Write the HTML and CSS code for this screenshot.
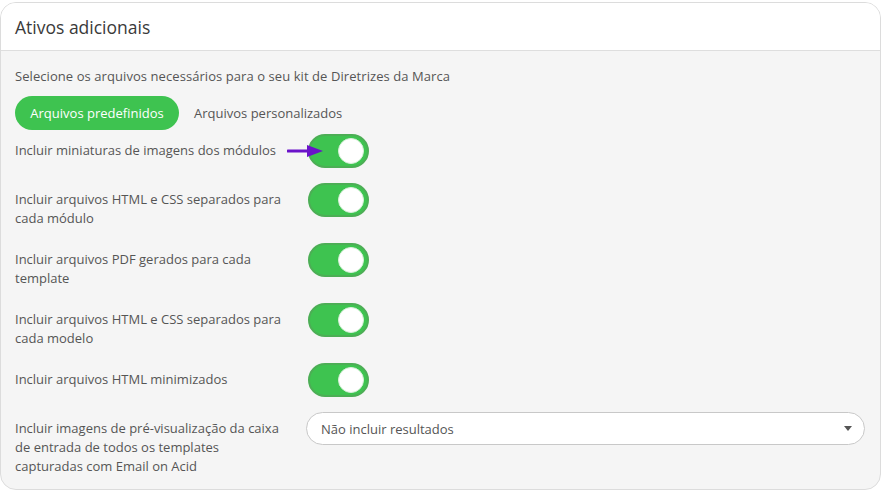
FILE: index.html
```html
<!DOCTYPE html>
<html lang="pt">
<head>
<meta charset="utf-8">
<link rel="stylesheet" href="styles.css">
</head>
<body>
<div class="card">
  <div class="card-header">Ativos adicionais</div>
  <div class="card-body">
    <p class="intro">Selecione os arquivos necessários para o seu kit de Diretrizes da Marca</p>
    <div class="tabs">
      <span class="tab active">Arquivos predefinidos</span>
      <span class="tab">Arquivos personalizados</span>
    </div>
    <div class="rows">
      <div class="row">
        <div class="label">Incluir miniaturas de imagens dos módulos</div>
        <div class="control">
          <span class="toggle"><span class="knob"></span></span>
          <svg class="arrow" width="38" height="14" viewBox="0 0 38 14"><line x1="1" y1="7" x2="24" y2="7" stroke="#6a13c9" stroke-width="3" stroke-linecap="round"/><polygon points="20,1 36,7 20,13" fill="#6a13c9"/></svg>
        </div>
      </div>
      <div class="row">
        <div class="label">Incluir arquivos HTML e CSS separados para cada módulo</div>
        <div class="control"><span class="toggle"><span class="knob"></span></span></div>
      </div>
      <div class="row">
        <div class="label">Incluir arquivos PDF gerados para cada template</div>
        <div class="control"><span class="toggle"><span class="knob"></span></span></div>
      </div>
      <div class="row">
        <div class="label">Incluir arquivos HTML e CSS separados para cada modelo</div>
        <div class="control"><span class="toggle"><span class="knob"></span></span></div>
      </div>
      <div class="row">
        <div class="label">Incluir arquivos HTML minimizados</div>
        <div class="control"><span class="toggle"><span class="knob"></span></span></div>
      </div>
      <div class="row">
        <div class="label">Incluir imagens de pré-visualização da caixa de entrada de todos os templates capturadas com Email on Acid</div>
        <div class="control grow">
          <div class="select">
            <span>Não incluir resultados</span>
            <svg width="8" height="5" viewBox="0 0 8 5"><polygon points="0,0 8,0 4,5" fill="#555"/></svg>
          </div>
        </div>
      </div>
    </div>
  </div>
</div>
</body>
</html>
```
FILE: styles.css
```css
* { box-sizing: border-box; }
html, body { margin: 0; padding: 0; background: #ffffff; }
body {
  font-family: "Open Sans", "Noto Sans", sans-serif;
  font-size: 13px;
  color: #555;
  padding-top: 2px;
}
.card {
  width: 881px;
  height: 488px;
  border: 1px solid #dcdcdc;
  border-radius: 16px;
  background: #f5f5f5;
  overflow: hidden;
}
.card-header {
  height: 48px;
  background: #fff;
  border-bottom: 1px solid #dedede;
  padding: 0 14px;
  display: flex;
  align-items: center;
  font-size: 17.5px;
  color: #3a3a3a;
}
.card-body {
  padding: 16px 14px 0 14px;
}
.intro {
  margin: 0;
  line-height: 19px;
  letter-spacing: 0.07px;
}
.tabs {
  display: flex;
  align-items: center;
  gap: 15px;
  margin-top: 10px;
}
.tab {
  height: 34px;
  display: flex;
  align-items: center;
  color: #555;
}
.tab.active {
  background: #3ec350;
  color: #fff;
  border-radius: 17px;
  padding: 0 10px;
  width: 164px;
  justify-content: center;
}
.rows {
  margin-top: 4px;
  display: flex;
  flex-direction: column;
  gap: 15px;
}
.row {
  display: flex;
  align-items: flex-start;
}
.label {
  width: 293px;
  padding-top: 7px;
  padding-right: 17px;
  line-height: 19px;
}
.control {
  position: relative;
  display: flex;
  align-items: center;
}
.control.grow { flex: 1; padding-right: 1px; }
.toggle {
  width: 61px;
  height: 34px;
  border-radius: 17px;
  background: #3ec350;
  border: 2px solid #4cae55;
  position: relative;
  display: block;
}
.knob {
  position: absolute;
  right: 3px;
  top: 2px;
  width: 26px;
  height: 26px;
  border-radius: 50%;
  background: #fff;
  border: 1px solid #d8f0da;
}
.arrow {
  position: absolute;
  left: -21px;
  top: 10px;
}
.select {
  width: 559px;
  height: 33px;
  background: #fff;
  border: 1px solid #c8c8c8;
  border-radius: 17px;
  display: flex;
  align-items: center;
  justify-content: space-between;
  padding: 0 12px 0 14px;
  color: #555;
}
```
